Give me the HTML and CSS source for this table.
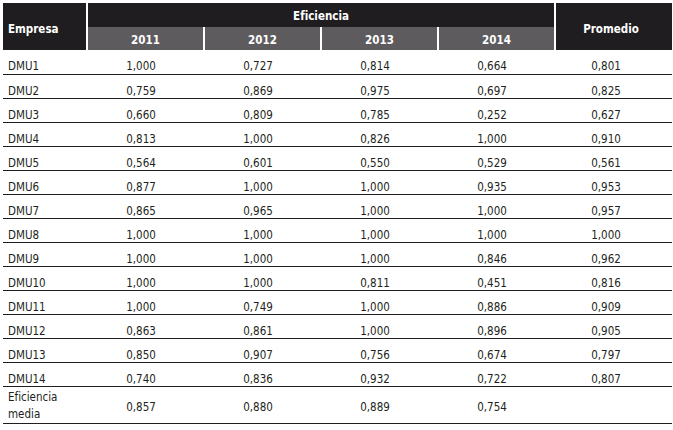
FILE: index.html
```html
<!DOCTYPE html>
<html lang="es">
<head>
<meta charset="utf-8">
<link rel="stylesheet" href="styles.css">
</head>
<body>
<table class="tbl">
  <colgroup>
    <col class="c-first">
    <col class="c-num"><col class="c-num"><col class="c-num"><col class="c-num"><col class="c-num">
  </colgroup>
  <thead>
    <tr class="h1">
      <th rowspan="2" class="th-emp">Empresa</th>
      <th colspan="4" class="th-ef">Eficiencia</th>
      <th rowspan="2" class="th-prom">Promedio</th>
    </tr>
    <tr class="h2">
      <th class="yr">2011</th>
      <th class="yr">2012</th>
      <th class="yr">2013</th>
      <th class="yr last">2014</th>
    </tr>
  </thead>
  <tbody>
    <tr><td>DMU1</td><td>1,000</td><td>0,727</td><td>0,814</td><td>0,664</td><td>0,801</td></tr>
    <tr><td>DMU2</td><td>0,759</td><td>0,869</td><td>0,975</td><td>0,697</td><td>0,825</td></tr>
    <tr><td>DMU3</td><td>0,660</td><td>0,809</td><td>0,785</td><td>0,252</td><td>0,627</td></tr>
    <tr><td>DMU4</td><td>0,813</td><td>1,000</td><td>0,826</td><td>1,000</td><td>0,910</td></tr>
    <tr><td>DMU5</td><td>0,564</td><td>0,601</td><td>0,550</td><td>0,529</td><td>0,561</td></tr>
    <tr><td>DMU6</td><td>0,877</td><td>1,000</td><td>1,000</td><td>0,935</td><td>0,953</td></tr>
    <tr><td>DMU7</td><td>0,865</td><td>0,965</td><td>1,000</td><td>1,000</td><td>0,957</td></tr>
    <tr><td>DMU8</td><td>1,000</td><td>1,000</td><td>1,000</td><td>1,000</td><td>1,000</td></tr>
    <tr><td>DMU9</td><td>1,000</td><td>1,000</td><td>1,000</td><td>0,846</td><td>0,962</td></tr>
    <tr><td>DMU10</td><td>1,000</td><td>1,000</td><td>0,811</td><td>0,451</td><td>0,816</td></tr>
    <tr><td>DMU11</td><td>1,000</td><td>0,749</td><td>1,000</td><td>0,886</td><td>0,909</td></tr>
    <tr><td>DMU12</td><td>0,863</td><td>0,861</td><td>1,000</td><td>0,896</td><td>0,905</td></tr>
    <tr><td>DMU13</td><td>0,850</td><td>0,907</td><td>0,756</td><td>0,674</td><td>0,797</td></tr>
    <tr><td>DMU14</td><td>0,740</td><td>0,836</td><td>0,932</td><td>0,722</td><td>0,807</td></tr>
    <tr class="r-last"><td>Eficiencia<br>media</td><td>0,857</td><td>0,880</td><td>0,889</td><td>0,754</td><td></td></tr>
  </tbody>
</table>
</body>
</html>
```
FILE: styles.css
```css
html, body {
  margin: 0;
  padding: 0;
  background: #ffffff;
}
body {
  padding: 3px 0 0 3px;
  font-family: "DejaVu Sans Condensed", "Liberation Sans Narrow", "Liberation Sans", sans-serif;
  font-size: 11.5px;
  color: #231f20;
}
.tbl {
  border-collapse: collapse;
  table-layout: fixed;
  width: 669px;
}
.c-first { width: 84px; }
.c-num { width: 117px; }
th {
  box-sizing: border-box;
  color: #ffffff;
  font-weight: bold;
  font-size: 11.5px;
  line-height: 14px;
  padding: 0;
  text-align: center;
  vertical-align: middle;
  background: #1f1d1f;
}
.h1 th { height: 24px; }
.h2 th { height: 23px; }
.th-emp {
  text-align: left;
  padding-left: 5px;
  padding-top: 4px;
  border-right: 2px solid #ffffff;
}
.th-ef { padding-top: 2px; }
.th-prom {
  border-left: 2px solid #ffffff;
  padding-top: 4px;
  padding-right: 6px;
}
.h2 .yr {
  background: #5d5b5d;
  border-right: 2px solid #ffffff;
  padding-top: 3px;
}
.h2 .yr.last { border-right: none; }
td {
  height: 24px;
  padding: 9px 9px 0 0;
  box-sizing: border-box;
  text-align: center;
  vertical-align: top;
  border-bottom: 1px solid #1f1d1f;
  line-height: 14px;
}
td:first-child {
  text-align: left;
  padding-left: 5px;
  padding-right: 0;
}
td:last-child { padding-right: 15px; }
.r-last td {
  height: 37px;
  vertical-align: middle;
  padding-top: 4px;
}
.r-last td:first-child { line-height: 17px; padding-top: 2px; }
```
